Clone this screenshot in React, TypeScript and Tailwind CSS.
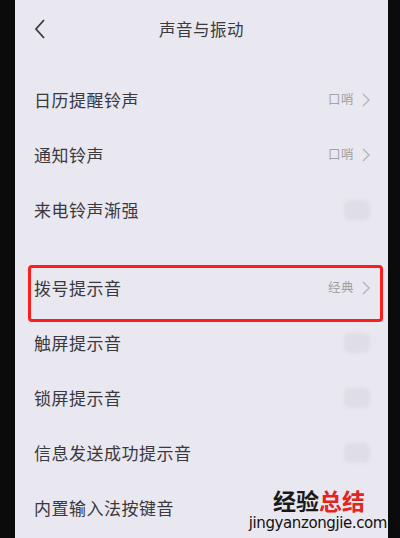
import React from "react";

const font = { fontFamily: '"Noto Sans CJK SC", "Noto Sans", sans-serif' };

function Chevron() {
  return (
    <svg width="8" height="14" viewBox="0 0 8 14" className="ml-[8px]">
      <path d="M1 1 L7 7 L1 13" fill="none" stroke="#b5b4ba" strokeWidth="1.4" />
    </svg>
  );
}

function Toggle() {
  return <div className="w-[26px] h-[20px] rounded-[6px] bg-[#dfdde5] blur-[1.5px] mr-[0px]" />;
}

function Row({ label, value, toggle, children }: { label: string; value?: string; toggle?: boolean; children?: React.ReactNode }) {
  return (
    <div className="relative h-[55px] flex items-center justify-between pl-[19px] pr-[18px]">
      <span className="text-[17px] text-[#3a393e] tracking-[0.5px]">{label}</span>
      {value && (
        <div className="flex items-center">
          <span className="text-[12.5px] text-[#a3a2a8] tracking-[0.5px]">{value}</span>
          <Chevron />
        </div>
      )}
      {toggle && <Toggle />}
      {children}
    </div>
  );
}

export default function App() {
  return (
    <div className="w-[400px] h-[538px] flex bg-black overflow-hidden" style={font}>
      <div className="w-[15px] bg-[#0b0b0b]" />
      <div className="relative flex-1 bg-[#e9e7ef] flex flex-col">
        <div className="h-[58px] relative flex items-center justify-center">
          <svg width="12" height="20" viewBox="0 0 12 20" className="absolute left-[19px] top-[19px]">
            <path d="M10 1 L2 10 L10 19" fill="none" stroke="#3a393e" strokeWidth="1.8" />
          </svg>
          <span className="text-[16.5px] text-[#3a393e] tracking-[0.5px]">声音与振动</span>
        </div>
        <div className="h-[14px]" />
        <Row label="日历提醒铃声" value="口哨" />
        <Row label="通知铃声" value="口哨" />
        <Row label="来电铃声渐强" toggle />
        <div className="h-[23px]" />
        <Row label="拨号提示音" value="经典">
          <div className="absolute left-[13px] right-[5px] top-[5px] h-[57px] border-[3px] border-[#ff1c1c] rounded-[4px]" />
        </Row>
        <Row label="触屏提示音" toggle />
        <Row label="锁屏提示音" toggle />
        <Row label="信息发送成功提示音" toggle />
        <Row label="内置输入法按键音" />
        <div className="absolute right-[1px] top-[487px] flex flex-col items-end">
          <div className="text-[23px] font-bold leading-[27px] mr-[22px]">
            <span className="text-[#1a1a1a]">经验</span>
            <span className="text-[#e0261f]">总结</span>
          </div>
          <div className="text-[15px] leading-[19px] text-[#111]" style={{ fontFamily: '"DejaVu Sans", sans-serif', letterSpacing: "-0.4px" }}>
            jingyanzongjie.com
          </div>
        </div>
      </div>
      <div className="w-[12px] bg-[#0b0b0b]" />
    </div>
  );
}
